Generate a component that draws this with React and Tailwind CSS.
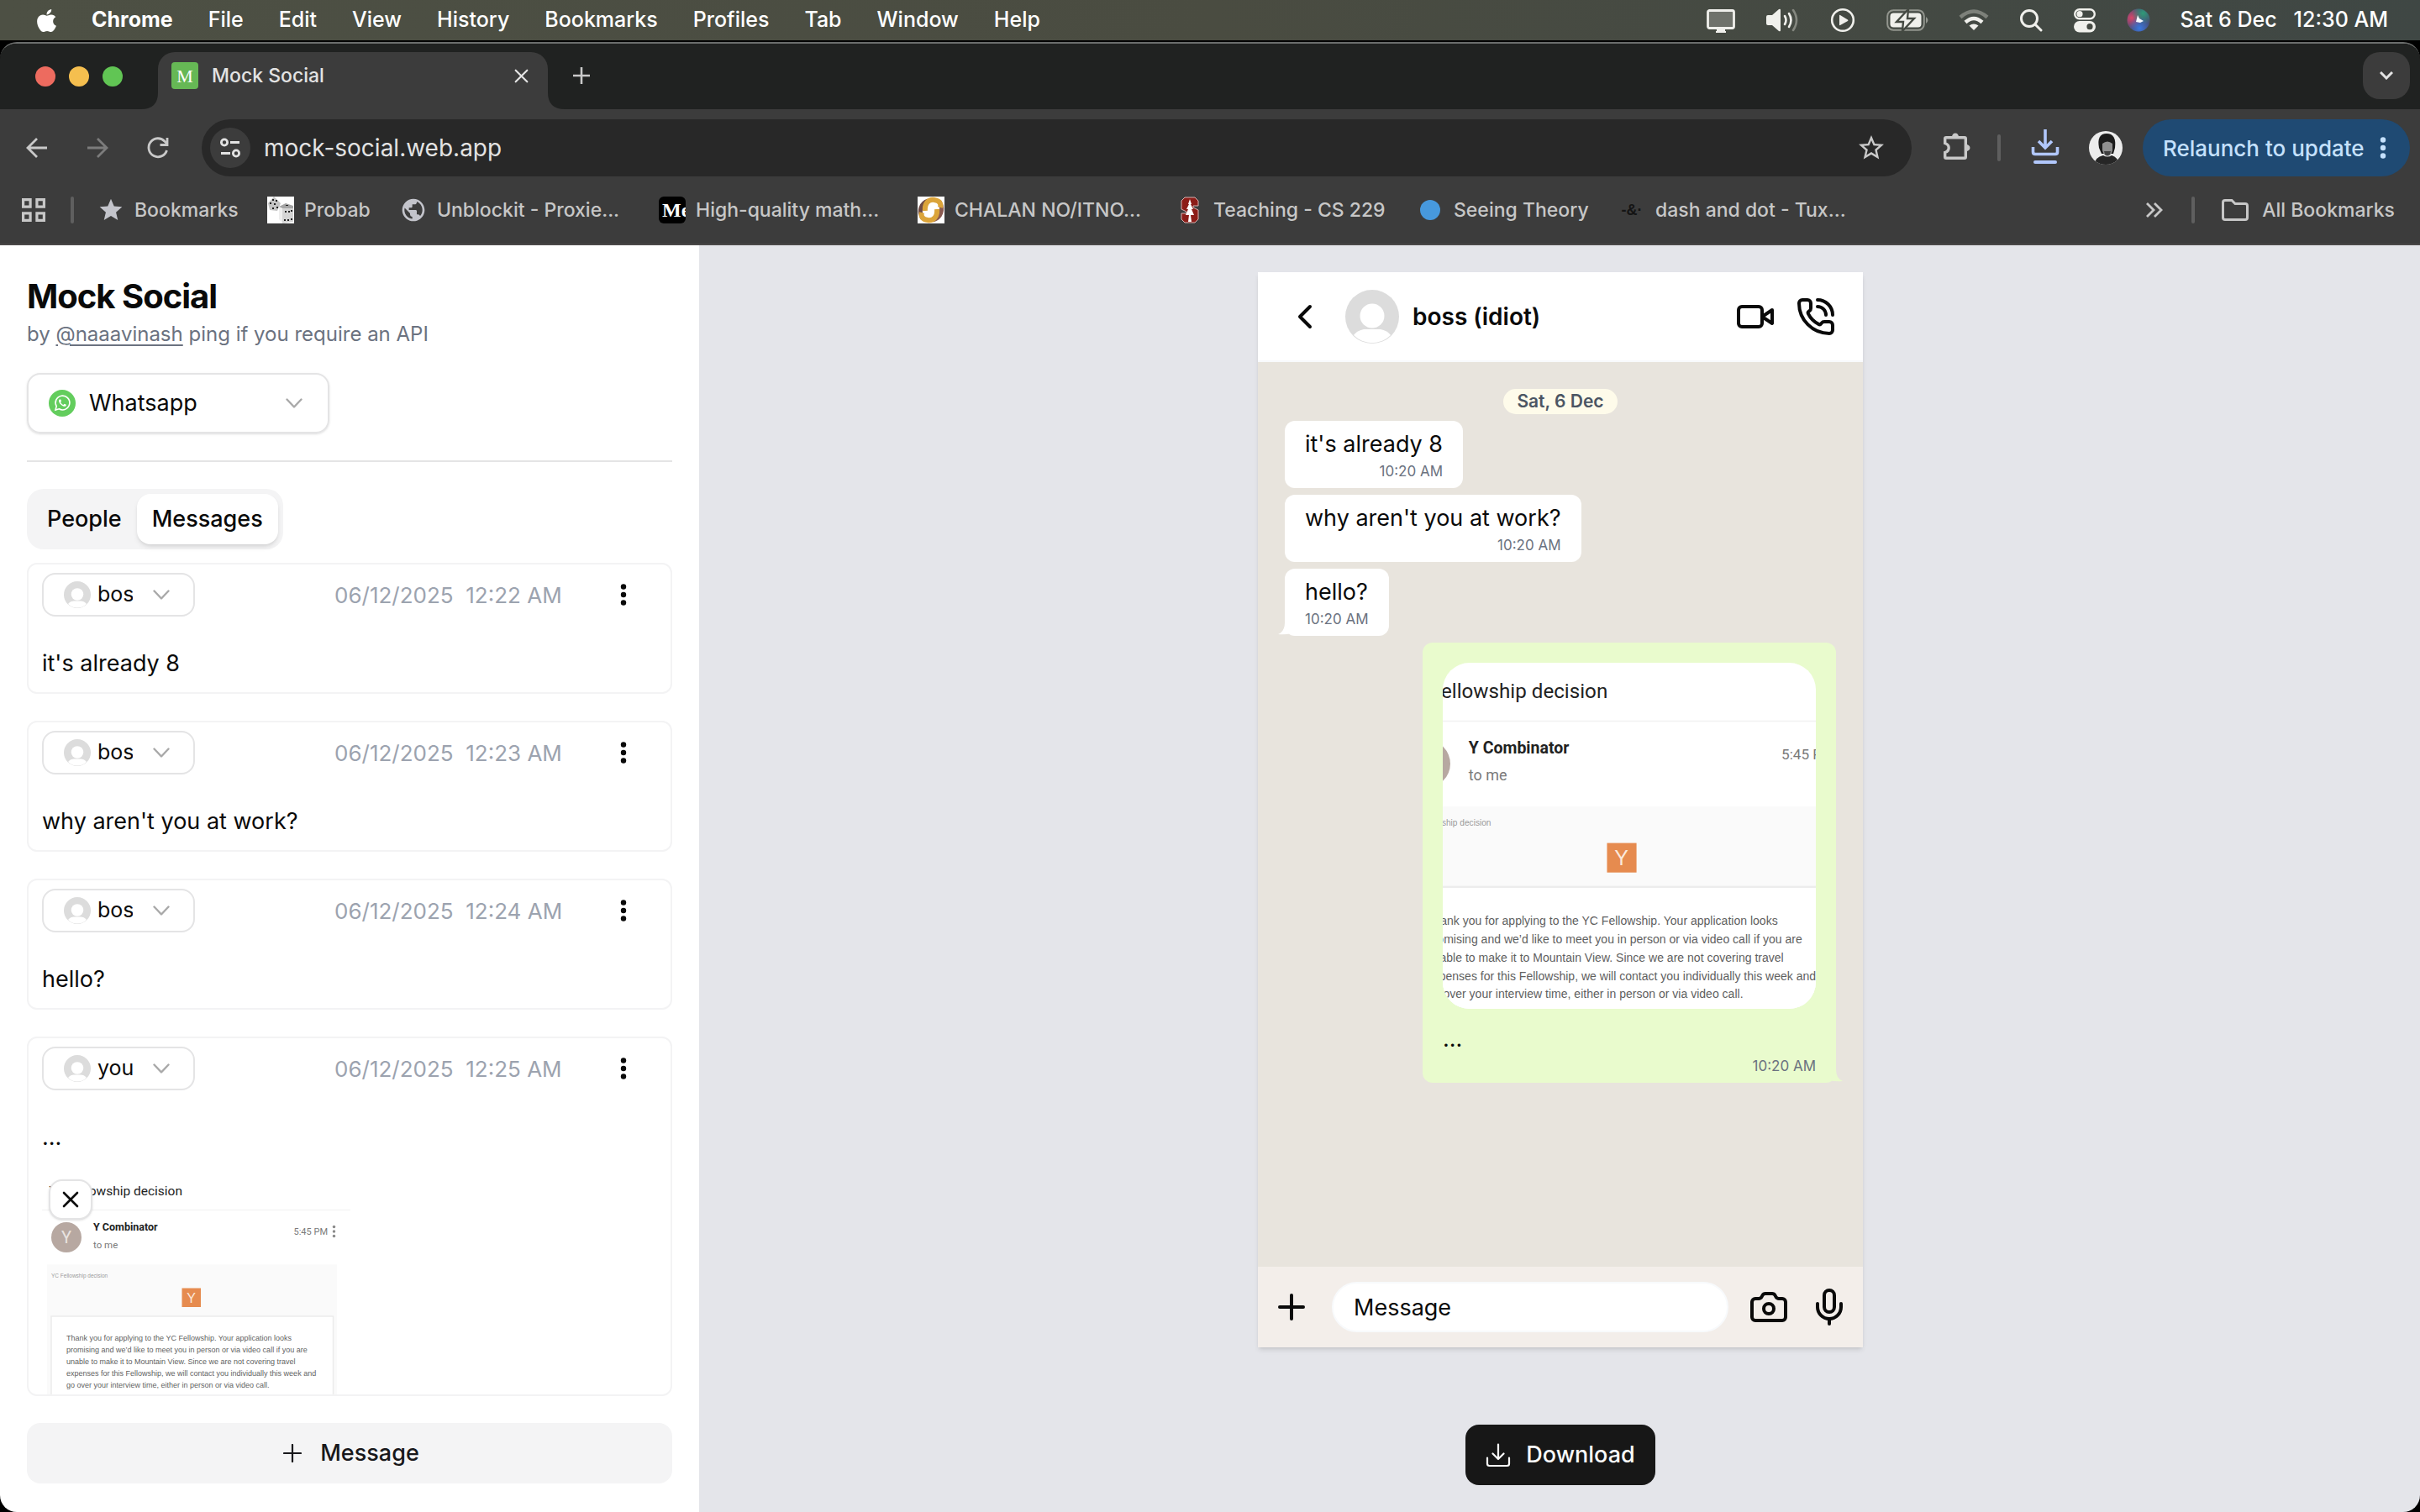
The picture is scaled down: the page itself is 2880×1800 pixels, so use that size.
import React from 'react';
import { Camera, ChevronLeft, Mic, PhoneCall, Plus } from 'lucide-react';
import { FaApple } from 'react-icons/fa';
import { MdPublic, MdStar, MdStarBorder } from 'react-icons/md';

const menus = ['File', 'Edit', 'View', 'History', 'Bookmarks', 'Profiles', 'Tab', 'Window', 'Help'];

const bookmarks = [
  { label: 'Bookmarks', icon: 'star', width: 'w-[202px]' },
  { label: 'Probab', icon: 'dice', width: 'w-[158px]' },
  { label: 'Unblockit - Proxie...', icon: 'globe', width: 'w-[308px]' },
  { label: 'High-quality math...', icon: 'me', width: 'w-[308px]' },
  { label: 'CHALAN NO/ITNO...', icon: 'chalan', width: 'w-[308px]' },
  { label: 'Teaching - CS 229', icon: 'tree', width: 'w-[286px]' },
  { label: 'Seeing Theory', icon: 'dot', width: 'w-[240px]' },
  { label: 'dash and dot - Tux...', icon: 'dash', width: 'w-[280px]' },
];

const messages = [
  { id: 1, sender: 'boss (idiot)', date: '06/12/2025  12:22 AM', text: "it's already 8" },
  { id: 2, sender: 'boss (idiot)', date: '06/12/2025  12:23 AM', text: "why aren't you at work?" },
  { id: 3, sender: 'boss (idiot)', date: '06/12/2025  12:24 AM', text: 'hello?' },
  { id: 4, sender: 'you', date: '06/12/2025  12:25 AM', text: '...', image: true },
];

const Chevron = ({ className }) => (
  <svg viewBox="0 0 20 12" className={className} fill="none" stroke="currentColor" strokeWidth="2.400" strokeLinecap="round" strokeLinejoin="round">
    <path d="M1.500 1.500l8.500 9 8.500-9" />
  </svg>
);

const Avatar = ({ className }) => (
  <svg viewBox="0 0 64 64" className={className}>
    <circle cx="32" cy="32" r="32" fill="#dcdcdc" />
    <circle cx="32" cy="31" r="14.5" fill="#fff" />
    <path d="M10 54c4-5 9-7 14-7h16c5 0 10 2 14 7a31 31 0 0 1-44 0z" fill="#fff" />
  </svg>
);

const Dots = ({ className }) => (
  <svg viewBox="0 0 8 28" className={className} fill="currentColor">
    <circle cx="4" cy="4.500" r="3.200" />
    <circle cx="4" cy="14" r="3.200" />
    <circle cx="4" cy="23.500" r="3.200" />
  </svg>
);

const Cross = ({ className }) => (
  <svg viewBox="0 0 20 20" className={className} fill="none" stroke="currentColor" strokeWidth="2.600" strokeLinecap="round">
    <path d="M2 2l16 16M18 2L2 18" />
  </svg>
);

// Attached mail screenshot, drawn once and cropped by whoever shows it
const MailShot = ({ className }) => (
  <svg viewBox="0 0 734 528" preserveAspectRatio="xMidYMid slice" className={className}>
    <rect width="734" height="528" fill="#fff" />
    <text x="334" y="54" textAnchor="end" fontSize="31" fill="#222" fontFamily="Roboto, sans-serif">YC Fellowship decision</text>
    <path d="M0 89h734" stroke="#f1f1f1" strokeWidth="2" />
    <circle cx="58" cy="154" r="36" fill="#b7a8a1" />
    <text x="58" y="168" textAnchor="middle" fontSize="40" fill="#e9e3e0" fontFamily="Roboto, sans-serif">Y</text>
    <text x="122" y="138" fontSize="25" fontWeight="700" fill="#222" fontFamily="Roboto, sans-serif">Y Combinator</text>
    <text x="122" y="179" fontSize="23" fill="#7a7a7a" fontFamily="Roboto, sans-serif">to me</text>
    <text x="599" y="148" fontSize="22" fill="#7a7a7a" fontFamily="Roboto, sans-serif">5:45 PM</text>
    <g fill="#8a8a8a">
      <circle cx="695" cy="129" r="3.500" />
      <circle cx="695" cy="140" r="3.500" />
      <circle cx="695" cy="151" r="3.500" />
    </g>
    <rect x="12" y="219" width="690" height="309" fill="#fafafa" />
    <text x="22" y="249" fontSize="13" fill="#9b9b9b" fontFamily="Liberation Sans, sans-serif">YC Fellowship decision</text>
    <rect x="333" y="275" width="45" height="45" fill="#e68b4f" />
    <text x="355" y="309" textAnchor="middle" fontSize="32" fill="#fbe9dc" fontFamily="Liberation Sans, sans-serif">Y</text>
    <rect x="22" y="342" width="671" height="200" fill="#fff" stroke="#ececec" strokeWidth="3" />
    <g fontSize="18" fill="#5f5f5f" fontFamily="Liberation Sans, sans-serif">
      <text x="58" y="400">Thank you for applying to the YC Fellowship. Your application looks</text>
      <text x="58" y="428">promising and we’d like to meet you in person or via video call if you are</text>
      <text x="58" y="456">unable to make it to Mountain View. Since we are not covering travel</text>
      <text x="58" y="484">expenses for this Fellowship, we will contact you individually this week and</text>
      <text x="58" y="512">go over your interview time, either in person or via video call.</text>
    </g>
  </svg>
);

const BookmarkIcon = ({ name }) => {
  switch (name) {
    case 'star':
      return <MdStar className="size-8 shrink-0 text-[#c3c4cb]" />;
    case 'dice':
      return (
        <svg viewBox="0 0 32 32" className="size-8 shrink-0">
          <rect width="32" height="32" fill="#fff" />
          <path d="M1 8L8 0l8 8-4 9-9-1z" fill="#c4c4c4" />
          <path d="M14 12l4 3v16l-4-4z" fill="#eee" />
          <path d="M14 12l8-4 9 3v3H18z" fill="#a5a5a5" />
          <path d="M18 14h13v16l-13 2z" fill="#d5d5d5" />
          <path d="M6 3h2v2H6zM10 4h2v2h-2zM3 7h2v2H3zM8 8h2v2H8zM11 12h2v2h-2zM6 13h2v2H6zM21 17h2v2h-2zM25 17h2v2h-2zM28 16h2v2h-2zM20 27h2v2h-2zM24 27h2v2h-2zM28 26h2v2h-2zM22 10h3v1h-3z" fill="#222" />
        </svg>
      );
    case 'globe':
      return <MdPublic className="size-8 shrink-0 text-[#c3c4cb]" />;
    case 'me':
      return (
        <span className="flex size-8 shrink-0 items-center overflow-hidden rounded-md bg-black pl-1 font-['Liberation_Serif',serif] text-[24px] font-bold text-white">
          Me
        </span>
      );
    case 'chalan':
      return (
        <svg viewBox="0 0 32 32" className="size-8 shrink-0">
          <rect width="32" height="32" fill="#fff" />
          <path d="M26 6c5 8 3 19-8 22" fill="none" stroke="#8a5a50" strokeWidth="5" />
          <path d="M6 26C1 18 3 8 13 5" fill="none" stroke="#6d4a44" strokeWidth="5" />
          <path d="M9 17C8 8 13 3 20 4s8 5 7 9M23 15c1 9-4 14-11 13s-8-5-7-9" fill="none" stroke="#dba43a" strokeWidth="6" />
        </svg>
      );
    case 'tree':
      return (
        <svg viewBox="0 0 32 32" className="size-8 shrink-0">
          <path d="M10 1h12l4 4v6h-6v2l6 3v11l-4 4H10l-4-4v-7h6v-2l-6-3V5z" fill="#8c1d18" stroke="#d9b3b0" strokeWidth="1" />
          <path d="M16 3l2 6h-1l3 6h-2l3 7h-4l1 8h-4l1-8h-4l3-7h-2l3-6h-1z" fill="#fff" />
        </svg>
      );
    case 'dot':
      return (
        <span className="flex size-8 shrink-0 items-center justify-center">
          <span className="size-6 rounded-full bg-[#4799dd]" />
        </span>
      );
    default:
      return (
        <span className="flex size-8 shrink-0 items-center justify-center font-['Liberation_Sans',sans-serif] text-[18px] font-bold text-[#141414]">
          -&amp;·
        </span>
      );
  }
};

const MenuBar = () => (
  <div className="flex h-12 shrink-0 items-center bg-linear-to-r from-[#4d5044] via-[#4a4c41] to-[#3f4744] pr-[38px] pl-10 text-[25px] font-medium text-white">
    <FaApple className="mr-[38px] size-[31px]" />
    <nav className="flex flex-1 items-center gap-[42px]">
      <span className="font-bold">Chrome</span>
      {menus.map((item) => (
        <span key={item}>{item}</span>
      ))}
    </nav>
    <div className="flex items-center gap-9">
      {/* display */}
      <svg viewBox="0 0 34 32" className="h-8 w-[34px]">
        <rect x="1.500" y="4.500" width="31" height="21" rx="2" fill="#6f726b" stroke="#f0f0ec" strokeWidth="2.800" />
        <path d="M12 26h10v3h1v2H11v-2h1z" fill="#f0f0ec" />
      </svg>
      {/* volume */}
      <svg viewBox="0 0 40 32" className="h-8 w-10" fill="none" strokeWidth="2.600" strokeLinecap="round">
        <path d="M1 12q0-2 2-2h5l8-7q2-1 2 1v24q0 2-2 1l-8-7H3q-2 0-2-2z" fill="#f0f0ec" />
        <path d="M23 11q3 5 0 10M28 8q5 8 0 16" stroke="#f0f0ec" />
        <path d="M33 4q8 12 0 24" stroke="#84877f" />
      </svg>
      {/* now playing */}
      <svg viewBox="0 0 32 32" className="size-8">
        <circle cx="16" cy="16" r="12.800" fill="none" stroke="#f0f0ec" strokeWidth="2.600" />
        <path d="M12 10.500v11q0 1 1 .500l9-5q1-1 0-1.500l-9-5.500q-1-.500-1 .500z" fill="#f0f0ec" />
      </svg>
      {/* battery */}
      <svg viewBox="0 0 50 28" className="h-7 w-[50px]">
        <rect x="1.200" y="2.200" width="43.600" height="23.600" rx="7" fill="none" stroke="#92958e" strokeWidth="2" />
        <rect x="4.500" y="5.500" width="37" height="17" rx="4" fill="#f0f0ec" />
        <path d="M47 10q5 4 0 8z" fill="#92958e" />
        <path d="M26 1L12 16h8l-1 11 14-15h-8z" fill="#f0f0ec" stroke="#454a43" strokeWidth="2.400" />
      </svg>
      {/* wifi */}
      <svg viewBox="0 0 36 28" className="h-7 w-9" fill="none" strokeWidth="4.500">
        <path d="M2 10.500q16-14 32 0" stroke="#7d817a" />
        <path d="M8 16.500q10-9 20 0" stroke="#f0f0ec" />
        <path d="M18 26l-5.500-5.500q5.500-4 11 0z" fill="#f0f0ec" />
      </svg>
      {/* search */}
      <svg viewBox="0 0 28 28" className="size-7" fill="none" stroke="#f0f0ec" strokeWidth="3" strokeLinecap="round">
        <circle cx="12" cy="12" r="9.500" />
        <path d="M19 19l7 7" />
      </svg>
      {/* control center */}
      <svg viewBox="0 0 28 30" className="h-[30px] w-7">
        <rect x="2.200" y="2.200" width="23.600" height="11" rx="5.500" fill="none" stroke="#f0f0ec" strokeWidth="2.400" />
        <circle cx="8" cy="7.700" r="3.600" fill="#f0f0ec" />
        <rect x="1" y="16" width="26" height="13.500" rx="6.700" fill="#f0f0ec" />
        <circle cx="20" cy="22.700" r="3.600" fill="#454a43" />
      </svg>
      {/* siri */}
      <svg viewBox="0 0 28 28" className="size-7">
        <defs>
          <radialGradient id="siriRed" cx="0.2" cy="0.4" r="0.5">
            <stop offset="0" stopColor="#d8466a" />
            <stop offset="1" stopColor="#d8466a" stopOpacity="0" />
          </radialGradient>
          <radialGradient id="siriGreen" cx="0.7" cy="0.2" r="0.5">
            <stop offset="0" stopColor="#2f9a78" />
            <stop offset="1" stopColor="#2f9a78" stopOpacity="0" />
          </radialGradient>
          <radialGradient id="siriBlue" cx="0.55" cy="0.85" r="0.5">
            <stop offset="0" stopColor="#3a78e0" />
            <stop offset="1" stopColor="#3a78e0" stopOpacity="0" />
          </radialGradient>
        </defs>
        <circle cx="14" cy="14" r="13.500" fill="#474a72" />
        <circle cx="14" cy="14" r="13.500" fill="url(#siriRed)" />
        <circle cx="14" cy="14" r="13.500" fill="url(#siriGreen)" />
        <circle cx="14" cy="14" r="13.500" fill="url(#siriBlue)" />
        <path d="M13 8l2 4 5 3-4 2-5-1z" fill="#f6f8ff" />
      </svg>
      <span className="flex gap-5">
        <span>Sat 6 Dec</span>
        <span>12:30 AM</span>
      </span>
    </div>
  </div>
);

const TabStrip = () => (
  <div className="flex h-[78px] shrink-0 bg-[#202221] pr-3 pl-[42px]">
    <div className="flex items-center gap-4">
      <span className="size-6 rounded-full bg-[#ed6b5f]" />
      <span className="size-6 rounded-full bg-[#f5bf4f]" />
      <span className="size-6 rounded-full bg-[#61c554]" />
    </div>
    <div className="ml-[22px] flex items-end pt-2.5">
      <svg viewBox="0 0 20 20" className="size-5" fill="#3c3c3c">
        <path d="M20 0v20H0Q20 20 20 0z" />
      </svg>
      <div className="flex h-full w-[464px] items-center rounded-t-[20px] bg-[#3c3c3c] px-4 pb-3">
        <span className="flex size-8 items-center justify-center rounded-sm bg-[#66b855] font-['Liberation_Serif',serif] text-[22px] text-white">M</span>
        <span className="ml-4 flex-1 text-[23px] font-medium text-[#e3e3e3]">Mock Social</span>
        <button aria-label="Close tab" className="flex size-8 items-center justify-center text-[#e3e3e3]">
          <Cross className="size-[17px]" />
        </button>
      </div>
      <svg viewBox="0 0 20 20" className="size-5" fill="#3c3c3c">
        <path d="M0 0v20h20Q0 20 0 0z" />
      </svg>
    </div>
    <button aria-label="New tab" className="ml-2.5 flex h-[76px] items-center text-[#c9c9c9]">
      <svg viewBox="0 0 20 20" className="size-5" stroke="currentColor" strokeWidth="2.600">
        <path d="M10 0v20M0 10h20" />
      </svg>
    </button>
    <button aria-label="Search tabs" className="mt-2.5 ml-auto flex size-14 items-center justify-center rounded-[20px] bg-[#3c3c3c] text-[#e3e3e3]">
      <svg viewBox="0 0 16 10" className="h-2.5 w-4" fill="none" stroke="currentColor" strokeWidth="3">
        <path d="M1 1l7 7 7-7" />
      </svg>
    </button>
  </div>
);

const Toolbar = () => (
  <div className="flex h-20 shrink-0 items-center bg-[#3c3c3c] pt-3 pr-3 pl-[30px]">
    <div className="flex h-[68px] w-[210px] items-center gap-11 text-[#c9c9c9]">
      <button aria-label="Back">
        <svg viewBox="0 0 28 28" className="size-7" fill="none" stroke="currentColor" strokeWidth="2.800">
          <path d="M26 14H4M14 3L3 14l11 11" />
        </svg>
      </button>
      <button aria-label="Forward" className="text-[#7c7c7c]">
        <svg viewBox="0 0 28 28" className="size-7" fill="none" stroke="currentColor" strokeWidth="2.800">
          <path d="M2 14h22M14 3l11 11-11 11" />
        </svg>
      </button>
      <button aria-label="Reload">
        <svg viewBox="0 0 28 28" className="size-7" fill="none" stroke="currentColor" strokeWidth="2.800">
          <path d="M24.500 17A11 11 0 1 1 22 6.200l3 3" />
          <path d="M25 2v8.500h-8.500" />
        </svg>
      </button>
    </div>
    <div className="flex h-[68px] flex-1 items-center rounded-full bg-[#282828] pr-[30px] pl-2.5">
      <button aria-label="Site information" className="flex size-12 items-center justify-center rounded-full bg-[#3c3c3c] text-[#e3e3e3]">
        <svg viewBox="0 0 26 24" className="h-6 w-[26px]" fill="none" stroke="currentColor" strokeWidth="2.800">
          <circle cx="6" cy="5.500" r="3.600" />
          <path d="M13 5.500h11M2 18.500h11" />
          <circle cx="20" cy="18.500" r="3.600" />
        </svg>
      </button>
      <input aria-label="Address" defaultValue="mock-social.web.app" className="ml-4 flex-1 bg-transparent text-[28px] text-[#e3e3e3] outline-none" />
      <button aria-label="Bookmark this page" className="text-[#c9c9c9]">
        <MdStarBorder className="size-9" />
      </button>
    </div>
    <button aria-label="Extensions" className="ml-[34px] text-[#c9c9c9]">
      <svg viewBox="0 0 36 36" className="size-9" fill="currentColor">
        <path d="M7 5.700h22q1.300 0 1.300 1.300v22q0 1.300-1.300 1.300H7q-1.300 0-1.300-1.300v-5.500q4.500-1.500 4.500-5.500t-4.500-5.500V7q0-1.300 1.300-1.300z" fill="none" stroke="currentColor" strokeWidth="3.400" />
        <path d="M14 5a4 4.500 0 0 1 8 0zM31 14a4.500 4 0 0 1 0 8z" />
      </svg>
    </button>
    <span className="ml-8 h-8 w-1 rounded-full bg-[#5f5f5f]" />
    <button aria-label="Downloads" className="ml-9 text-[#b1c7fb]">
      <svg viewBox="0 0 34 44" className="h-11 w-[34px]" fill="none" stroke="currentColor" strokeWidth="3.600">
        <path d="M17 0v21M9 14l8 8 8-8M2.500 21v6q0 2.500 2.500 2.500h24q2.500 0 2.500-2.500v-6" />
        <path d="M5 39h24" strokeWidth="4" strokeLinecap="round" />
      </svg>
    </button>
    <button aria-label="Profile" className="ml-[35px]">
      <svg viewBox="0 0 40 40" className="size-10 rounded-full">
        <rect width="40" height="40" fill="#ececec" />
        <path d="M12 20Q9 3 21 3t10 17l-2 7H15z" fill="#1c1c1c" />
        <path d="M16 15q6-5 12 0v8q-2 7-6 7t-6-7z" fill="#8f8f8f" />
        <path d="M18 24h8l-1 4q-3 2-6 0z" fill="#3f3f3f" />
        <path d="M7 40q0-9 10-11 5 3 10 0 8 2 8 11z" fill="#262626" />
      </svg>
    </button>
    <button className="ml-6 flex h-[68px] w-[318px] items-center justify-between rounded-full bg-[#1f4a73] pr-7 pl-6 text-[26px] font-medium whitespace-nowrap text-[#c5e1fd]">
      Relaunch to update
      <Dots className="h-8 w-2" />
    </button>
  </div>
);

const BookmarksBar = () => (
  <div className="flex h-[82px] shrink-0 items-center border-b-2 border-[#4a4848] bg-[#3c3c3c] pr-[30px] pl-[26px] text-[23px] font-medium text-[#c7c7c7]">
    <svg viewBox="0 0 28 28" className="size-7" fill="none" stroke="#c7c7c7" strokeWidth="3.200">
      <path d="M1.600 1.600h8.500v8.500H1.600zM17.900 1.600h8.500v8.500h-8.500zM1.600 17.900h8.500v8.500H1.600zM17.900 17.900h8.500v8.500h-8.500z" />
    </svg>
    <span className="mr-7 ml-[30px] h-8 w-1 rounded-full bg-[#5f5f5f]" />
    {bookmarks.map((item) => (
      <a key={item.label} href="#" className={`flex shrink-0 items-center gap-3 whitespace-nowrap ${item.width}`}>
        <BookmarkIcon name={item.icon} />
        {item.label}
      </a>
    ))}
    <button aria-label="More bookmarks" className="ml-auto">
      <svg viewBox="0 0 20 18" className="h-[18px] w-5" fill="none" stroke="#c7c7c7" strokeWidth="2.800">
        <path d="M1 1l8 8-8 8M10 1l8 8-8 8" />
      </svg>
    </button>
    <span className="mr-8 ml-[34px] h-8 w-1 rounded-full bg-[#5f5f5f]" />
    <a href="#" className="flex items-center gap-4">
      <svg viewBox="0 0 32 26" className="h-[26px] w-8" fill="none" stroke="#c7c7c7" strokeWidth="3">
        <path d="M1.500 4q0-2.500 2.500-2.500h8l4 4h12q2.500 0 2.500 2.500v14q0 2.500-2.500 2.500H4q-2.500 0-2.500-2.500z" />
      </svg>
      All Bookmarks
    </a>
  </div>
);

const MessageCard = ({ message }) => (
  <article className="shrink-0 overflow-hidden rounded-xl border-2 border-[#f3f3f4] px-4 pt-2.5">
    <div className="flex h-[52px] items-center">
      <label className="flex h-[52px] w-[182px] items-center rounded-2xl border-2 border-[#e4e4e5] pr-7 pl-6 text-[25px]">
        <Avatar className="size-8 shrink-0" />
        <select aria-label="Sender" defaultValue={message.sender} className="ml-2 w-[42px] appearance-none overflow-hidden bg-transparent outline-none">
          <option>{message.sender}</option>
        </select>
        <Chevron className="ml-auto h-3 w-5 shrink-0 text-[#a9a9a9]" />
      </label>
      <input aria-label="Sent at" defaultValue={message.date} className="ml-[166px] w-[300px] bg-transparent text-[26px] text-[#9ca3af] outline-none" />
      <button aria-label="Message options" className="ml-10">
        <Dots className="h-7 w-2" />
      </button>
    </div>
    <input aria-label="Message text" defaultValue={message.text} className="mt-9 mb-[14px] block h-10 w-full bg-transparent text-[27px] outline-none" />
    {message.image && (
      <div className="relative mt-[22px]">
        <MailShot className="h-[264px] w-[367px]" />
        <button aria-label="Remove image" className="absolute top-2 left-2 flex h-12 w-[52px] items-center justify-center rounded-2xl border-2 border-[#e4e4e5] bg-white shadow-sm">
          <Cross className="size-5" />
        </button>
      </div>
    )}
  </article>
);

const Sidebar = () => (
  <aside className="flex w-[832px] shrink-0 flex-col bg-white px-8 pt-8 pb-[34px]">
    <h1 className="text-[40px] leading-[58px] font-bold tracking-tight">Mock Social</h1>
    <p className="text-[24px] leading-8 text-[#6b7280]">
      by <a href="#" className="underline underline-offset-4">@naaavinash</a> ping if you require an API
    </p>
    <label className="mt-[30px] flex h-[72px] w-[360px] items-center rounded-2xl border-2 border-[#e4e4e5] px-6 text-[27px] shadow-sm">
      <svg viewBox="0 0 32 32" className="size-8 shrink-0">
        <circle cx="16" cy="16" r="16" fill="#63cd5d" />
        <path d="M8 24l1.200-4.300a8.400 8.400 0 1 1 3.100 3.100z" fill="none" stroke="#fff" strokeWidth="1.600" />
        <path d="M12.800 11.500c-1.600 1.500-.500 4 1.600 6s4.800 3.200 6.100 1.700l.300-1.400-2.200-1.100-1.200 1.200c-1.400-.500-2.700-1.800-3.300-3.200l1-1.200-.900-2.100z" fill="#fff" />
      </svg>
      <select aria-label="Platform" className="ml-4 flex-1 appearance-none bg-transparent outline-none">
        <option>Whatsapp</option>
      </select>
      <Chevron className="mr-1.5 h-3 w-5 shrink-0 text-[#a9a9a9]" />
    </label>
    <hr className="mt-8 border-t-2 border-[#e4e4e5]" />
    <div role="tablist" className="mt-8 flex h-[72px] shrink-0 items-center self-start rounded-[20px] bg-[#f4f4f5] p-1.5 text-[27px] font-medium">
      <button role="tab" className="h-[60px] px-[18px]">People</button>
      <button role="tab" aria-selected="true" className="h-[60px] rounded-2xl bg-white px-[18px] shadow-md">Messages</button>
    </div>
    <div className="mt-4 flex min-h-0 flex-1 flex-col gap-8 overflow-hidden">
      {messages.map((message) => (
        <MessageCard key={message.id} message={message} />
      ))}
    </div>
    <button className="mt-8 flex h-[72px] shrink-0 items-center justify-center gap-[22px] rounded-2xl bg-[#f4f4f5] pl-1 text-[27px] font-medium text-[#18181b]">
      <svg viewBox="0 0 22 22" className="size-[22px]" stroke="currentColor" strokeWidth="2.200" strokeLinecap="round">
        <path d="M11 1v20M1 11h20" />
      </svg>
      Message
    </button>
  </aside>
);

const Bubble = ({ text, mine, tail, image }) => (
  <div className={`relative rounded-xl px-6 py-2 ${mine ? 'self-end bg-[#e9fbcd]' : 'self-start bg-white'}`}>
    {image && <MailShot className="my-4 h-[412px] w-[444px] rounded-[32px]" />}
    <p className="text-[27px] leading-10">{text}</p>
    <p className="text-right text-[17px] leading-6 text-[#6b7280]">10:20 AM</p>
    {tail && !mine && (
      <svg viewBox="0 0 16 16" className="absolute bottom-0 -left-2 size-4" fill="#fff">
        <path d="M8 0Q8 11 0 14q8 1 16-1V0z" />
      </svg>
    )}
    {tail && mine && (
      <svg viewBox="0 0 16 16" className="absolute -right-2 bottom-0 size-4" fill="#e9fbcd">
        <path d="M8 0q0 11 8 14-8 1-16-1V0z" />
      </svg>
    )}
  </div>
);

const Phone = () => (
  <section className="flex h-[1280px] w-[720px] shrink-0 flex-col bg-[#e8e4dd] shadow-md">
    <header className="flex h-[107px] shrink-0 items-center border-b-2 border-[#f8fafc] bg-white px-8">
      <button aria-label="Back">
        <ChevronLeft className="size-12" />
      </button>
      <Avatar className="mr-4 ml-6 size-16" />
      <h2 className="flex-1 text-[28px] font-semibold">boss (idiot)</h2>
      <button aria-label="Video call">
        <svg viewBox="0 0 24 24" className="size-12" fill="none" stroke="currentColor" strokeWidth="2" strokeLinecap="round" strokeLinejoin="round">
          <path d="M22 8l-6 4 6 4z" />
          <rect x="2" y="6" width="14" height="12" rx="2" />
        </svg>
      </button>
      <button aria-label="Voice call" className="ml-6">
        <PhoneCall className="size-12" />
      </button>
    </header>
    <div className="flex flex-1 flex-col gap-2 px-8 pt-8">
      <span className="flex h-[30px] items-center self-center rounded-2xl bg-[#fefbea] px-4 text-[21px] font-semibold text-[#4b5563]">Sat, 6 Dec</span>
      <Bubble text="it's already 8" />
      <Bubble text="why aren't you at work?" />
      <Bubble text="hello?" tail />
      <Bubble text="..." mine tail image />
    </div>
    <footer className="flex h-24 shrink-0 items-center gap-6 bg-[#f3eeea] px-4">
      <button aria-label="Attach">
        <Plus className="size-12" />
      </button>
      <input aria-label="Message" defaultValue="Message" className="h-[60px] min-w-0 flex-1 rounded-full border-2 border-[#f8fafc] bg-white px-6 text-[27px] outline-none" />
      <button aria-label="Camera">
        <Camera className="size-12" />
      </button>
      <button aria-label="Record">
        <Mic className="size-12" />
      </button>
    </footer>
  </section>
);

function App() {
  return (
    <div className="flex h-screen flex-col overflow-hidden bg-black font-['Inter','Noto_Sans',sans-serif] text-[#0a0a0a]">
      <MenuBar />
      <div className="mt-0.5 flex min-h-0 flex-1 flex-col overflow-hidden rounded-[20px] border-t-2 border-[#6b6d6c]">
        <TabStrip />
        <Toolbar />
        <BookmarksBar />
        <div className="flex min-h-0 flex-1">
          <Sidebar />
          <main className="flex flex-1 flex-col items-center justify-between bg-[#e4e5ea] py-8 pl-0.5">
            <Phone />
            <button className="flex h-[72px] items-center gap-[18px] rounded-2xl bg-[#171717] px-6 text-[27px] font-medium text-[#fafafa]">
              <svg viewBox="0 0 30 30" className="size-[30px]" fill="none" stroke="currentColor" strokeWidth="2.200" strokeLinecap="round" strokeLinejoin="round">
                <path d="M15 2.500v17M8.500 13.500l6.500 6.500 6.500-6.500M2 18.500v7q0 2.500 2.500 2.500h21q2.500 0 2.500-2.500v-7" />
              </svg>
              Download
            </button>
          </main>
        </div>
      </div>
    </div>
  );
}

export default App;
